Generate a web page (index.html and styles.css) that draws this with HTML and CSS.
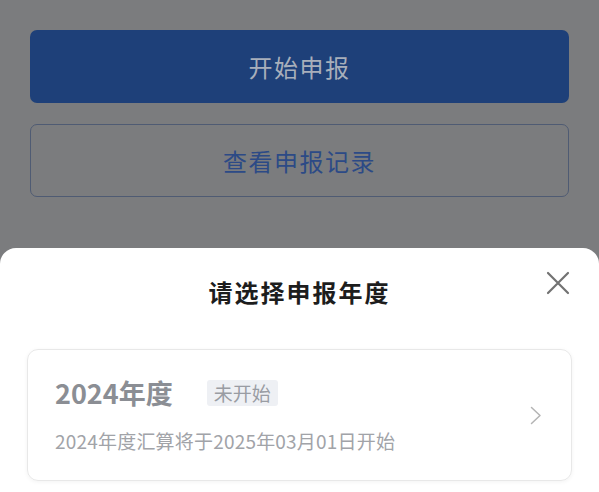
FILE: index.html
```html
<!DOCTYPE html>
<html lang="zh-CN">
<head>
<meta charset="utf-8">
<link rel="stylesheet" href="styles.css">
</head>
<body>
<div class="page">
  <div class="actions">
    <div class="btn btn-primary">开始申报</div>
    <div class="btn btn-outline">查看申报记录</div>
  </div>
  <div class="sheet">
    <div class="sheet-header">
      <div class="sheet-title">请选择申报年度</div>
      <div class="close" aria-label="关闭">
        <svg width="24" height="24" viewBox="0 0 24 24"><path d="M2 2 L22 22 M22 2 L2 22" stroke="#727272" stroke-width="2.2" fill="none" stroke-linecap="round"/></svg>
      </div>
    </div>
    <div class="card">
      <div class="card-body">
        <div class="card-row">
          <span class="year">2024年度</span>
          <span class="tag">未开始</span>
        </div>
        <div class="desc">2024年度汇算将于2025年03月01日开始</div>
      </div>
      <div class="chev">
        <svg width="12" height="19" viewBox="0 0 12 19"><path d="M1.5 1.5 L10 9.5 L1.5 17.5" stroke="#b4b4b4" stroke-width="1.5" fill="none" stroke-linecap="round" stroke-linejoin="round"/></svg>
      </div>
    </div>
  </div>
</div>
</body>
</html>
```

FILE: styles.css
```css
html, body {
  margin: 0;
  padding: 0;
  width: 599px;
  height: 492px;
  overflow: hidden;
  background: #7b7c7e;
  font-family: "Noto Sans CJK SC", "Noto Sans", sans-serif;
}
.page {
  display: flex;
  flex-direction: column;
  height: 492px;
}
.actions {
  display: flex;
  flex-direction: column;
  gap: 21px;
  padding: 30px 30px 0 30px;
}
.btn {
  height: 73px;
  border-radius: 7px;
  box-sizing: border-box;
  display: flex;
  align-items: center;
  justify-content: center;
  font-size: 24px;
  letter-spacing: 1.5px;
}
.btn-primary {
  background: #1e4079;
  color: #a8afbb;
}
.btn-outline {
  border: 1.5px solid #4f5b73;
  color: #2c4a86;
  background: transparent;
}
.sheet {
  margin-top: 51px;
  flex: 1;
  background: #ffffff;
  border-radius: 16px 16px 0 0;
  position: relative;
  display: flex;
  flex-direction: column;
}
.sheet-header {
  height: 88px;
  display: flex;
  align-items: center;
  justify-content: center;
}
.sheet-title {
  font-size: 24px;
  font-weight: 700;
  color: #1d1d1d;
  letter-spacing: 2px;
  padding-bottom: 2px;
}
.close {
  position: absolute;
  right: 29px;
  top: 23px;
  width: 24px;
  height: 24px;
}
.close svg { display: block; }
.card {
  margin: 13px 27px 0 27px;
  height: 132px;
  box-sizing: border-box;
  border: 1px solid #e8e8e8;
  border-radius: 11px;
  box-shadow: 0 1px 4px rgba(0,0,0,0.05);
  display: flex;
  align-items: center;
  padding: 0 29px 0 27px;
}
.card-body {
  flex: 1;
  display: flex;
  flex-direction: column;
  gap: 18px;
}
.card-row {
  display: flex;
  align-items: center;
  gap: 34px;
}
.year {
  font-size: 27px;
  font-weight: 700;
  color: #8b8e94;
  line-height: 34px;
}
.tag {
  background: #eef0f4;
  color: #999ca3;
  font-size: 19px;
  line-height: 26px;
  padding: 0 7px;
  border-radius: 3px;
}
.desc {
  font-size: 19px;
  letter-spacing: 0.2px;
  color: #a1a3a8;
  line-height: 26px;
}
.chev svg { display: block; }
```
